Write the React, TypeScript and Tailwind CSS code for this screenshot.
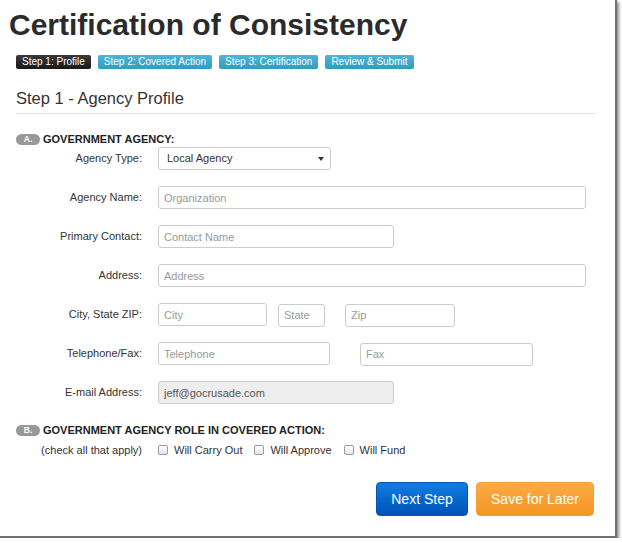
import React from "react";

const steps = [
  { label: "Step 1: Profile", active: true },
  { label: "Step 2: Covered Action", active: false },
  { label: "Step 3: Certification", active: false },
  { label: "Review & Submit", active: false },
];

const SectionHeader = ({ letter, title }: { letter: string; title: string }) => (
  <div className="flex items-center h-[12px]">
    <span className="w-[24px] h-[11px] rounded-full bg-[#999] text-white text-[8.5px] font-bold leading-[11px] text-center">
      {letter}
    </span>
    <span className="ml-[3px] text-[11px] font-bold leading-[12px] text-[#222]">{title}</span>
  </div>
);

const Row = ({ label, children }: { label: string; children: React.ReactNode }) => (
  <div className="flex items-center h-[23px]">
    <div className="w-[142px] shrink-0 text-right text-[11px] text-[#333]">{label}</div>
    <div className="ml-[16px] flex items-center">{children}</div>
  </div>
);

const Input = ({
  placeholder,
  value,
  width,
  disabled,
}: {
  placeholder?: string;
  value?: string;
  width: string;
  disabled?: boolean;
}) => (
  <input
    className={`${width} h-[23px] px-[5px] border border-[#ccc] rounded-[3px] text-[11px] text-[#555] placeholder:text-[#999] outline-none ${
      disabled ? "bg-[#eee]" : "bg-white"
    }`}
    placeholder={placeholder}
    defaultValue={value}
    readOnly={disabled}
  />
);

const Check = ({ label }: { label: string }) => (
  <label className="flex items-center">
    <span className="w-[10px] h-[10px] border border-[#9a9a9a] rounded-[2px] bg-gradient-to-b from-white to-[#e6e6e6]" />
    <span className="ml-[6px] text-[11px] text-[#333]">{label}</span>
  </label>
);

export default function App() {
  return (
    <div className="w-[617px] h-[538px] bg-white border-r-2 border-b-2 border-[#707070] shadow-[2px_2px_3px_rgba(0,0,0,0.45)] font-['Liberation_Sans',Arial,sans-serif] text-[#333]">
      <h1 className="pt-[5px] pl-[9px] text-[30px] leading-[40px] font-bold text-[#2b2b2b]">
        Certification of Consistency
      </h1>

      <div className="pl-[16px] pr-[18px]">
        <div className="mt-[10px] flex gap-[7px]">
          {steps.map((s) => (
            <span
              key={s.label}
              className={`h-[14px] px-[6px] rounded-[2px] text-[10px] leading-[14px] text-white ${
                s.active
                  ? "bg-gradient-to-b from-[#3a3a3a] to-[#1a1a1a]"
                  : "bg-gradient-to-b from-[#4fb4d6] to-[#2f9cc3]"
              }`}
            >
              {s.label}
            </span>
          ))}
        </div>

        <h2 className="mt-[19px] text-[16.5px] leading-[20px] text-[#333]">Step 1 - Agency Profile</h2>
        <div className="mt-[5px] border-t border-[#e5e5e5]" />

        <div className="mt-[19px]">
          <SectionHeader letter="A." title="GOVERNMENT AGENCY:" />
        </div>

        <div className="mt-[2px] flex flex-col gap-[16px] -ml-[16px]">
          <Row label="Agency Type:">
            <div className="w-[173px] h-[23px] border border-[#ccc] rounded-[3px] flex items-center justify-between pl-[8px] pr-[6px] text-[11px] text-[#333]">
              <span>Local Agency</span>
              <svg width="6" height="4" viewBox="0 0 6 4">
                <path d="M0 0h6L3 4z" fill="#333" />
              </svg>
            </div>
          </Row>
          <Row label="Agency Name:">
            <Input placeholder="Organization" width="w-[428px]" />
          </Row>
          <Row label="Primary Contact:">
            <Input placeholder="Contact Name" width="w-[236px]" />
          </Row>
          <Row label="Address:">
            <Input placeholder="Address" width="w-[428px]" />
          </Row>
          <Row label="City, State ZIP:">
            <Input placeholder="City" width="w-[109px]" />
            <div className="ml-[11px]">
              <Input placeholder="State" width="w-[47px]" />
            </div>
            <div className="ml-[20px]">
              <Input placeholder="Zip" width="w-[110px]" />
            </div>
          </Row>
          <Row label="Telephone/Fax:">
            <Input placeholder="Telephone" width="w-[172px]" />
            <div className="ml-[30px]">
              <Input placeholder="Fax" width="w-[173px]" />
            </div>
          </Row>
          <Row label="E-mail Address:">
            <Input value="jeff@gocrusade.com" width="w-[236px]" disabled />
          </Row>
        </div>

        <div className="mt-[20px]">
          <SectionHeader letter="B." title="GOVERNMENT AGENCY ROLE IN COVERED ACTION:" />
        </div>

        <div className="mt-[6px] flex items-center h-[16px] -ml-[16px]">
          <div className="w-[142px] shrink-0 text-right text-[11px] text-[#333]">(check all that apply)</div>
          <div className="ml-[16px] flex items-center gap-[12px]">
            <Check label="Will Carry Out" />
            <Check label="Will Approve" />
            <Check label="Will Fund" />
          </div>
        </div>

        <div className="mt-[24px] flex justify-end gap-[8px] pr-[3px]">
          <button className="h-[34px] w-[92px] rounded-[4px] border border-[#0a52b0] bg-gradient-to-b from-[#137ee0] to-[#0052b8] text-white text-[14px]">
            Next Step
          </button>
          <button className="h-[34px] w-[118px] rounded-[4px] border border-[#f0a040] bg-gradient-to-b from-[#fbab45] to-[#f5961f] text-white text-[14px]">
            Save for Later
          </button>
        </div>
      </div>
    </div>
  );
}
